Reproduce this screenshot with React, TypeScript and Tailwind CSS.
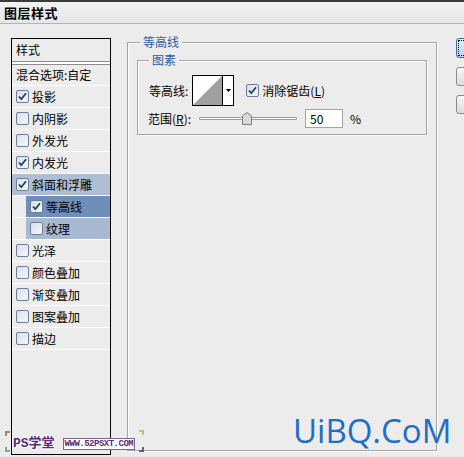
import React from "react";

const font = "font-['SimSun','Noto_Sans_CJK_SC',sans-serif]";

function Check({ on }: { on: boolean }) {
  return (
    <svg width="13" height="13" viewBox="0 0 13 13" className="shrink-0">
      <defs>
        <linearGradient id="cbg" x1="0" y1="0" x2="1" y2="1">
          <stop offset="0" stopColor="#d8dfe9" />
          <stop offset="1" stopColor="#f7f8fa" />
        </linearGradient>
      </defs>
      <rect x="0.5" y="0.5" width="12" height="12" rx="1.5" fill="url(#cbg)" stroke="#6d7d93" />
      {on && <path d="M3 6.5 L5.3 9.2 L10 3.3" fill="none" stroke="#1f3f6e" strokeWidth="1.8" />}
    </svg>
  );
}

type Row = { label: string; on?: boolean; sub?: boolean; tone?: "mid" | "dark" | "light" };

const rows: Row[] = [
  { label: "投影", on: true },
  { label: "内阴影" },
  { label: "外发光" },
  { label: "内发光", on: true },
  { label: "斜面和浮雕", on: true, tone: "mid" },
  { label: "等高线", on: true, sub: true, tone: "dark" },
  { label: "纹理", sub: true, tone: "light" },
  { label: "光泽" },
  { label: "颜色叠加" },
  { label: "渐变叠加" },
  { label: "图案叠加" },
  { label: "描边" },
];

function ListRow({ r }: { r: Row }) {
  const bg =
    r.tone === "mid" ? "bg-[#afbed2]" : r.tone === "dark" ? "bg-[#6f8fba]" : r.tone === "light" ? "bg-[#a8bad3]" : "";
  return (
    <div className="h-[22px] flex border-b border-white">
      <div className={`flex-1 flex items-center gap-[3px] ${r.sub ? "ml-[14px] pl-[4px]" : "pl-[4px]"} ${bg}`}>
        <Check on={!!r.on} />
        <span className="text-[12px] text-black">{r.label}</span>
      </div>
    </div>
  );
}

export default function App() {
  return (
    <div className={`w-[464px] h-[457px] overflow-hidden relative bg-[#ececec] ${font} text-[12px] text-black`}>
      <div className="h-[24px] border-t-2 border-[#3b3b3b] border-b border-b-[#b4b4b4] bg-gradient-to-b from-[#f3f3f3] to-[#e6e6e6] flex items-center pl-[4px]">
        <span className="text-[13px] font-bold tracking-[0.5px]">图层样式</span>
      </div>
      <div className="flex pt-[14px] pl-[11px]">
        <div className="w-[100px] h-[417px] border border-black bg-[#ececec] shrink-0">
          <div className="h-[23px] flex items-center pl-[4px] border-b border-[#8c8c8c]">样式</div>
          <div className="h-[2px] bg-white" />
          <div className="h-[22px] flex items-center pl-[4px] border-t border-[#8c8c8c] border-b border-b-white">混合选项:自定</div>
          {rows.map((r) => (
            <ListRow key={r.label} r={r} />
          ))}
        </div>

        <div className="ml-[16px] mt-[4px] w-[310px] h-[409px] border border-[#a3a3a3] shadow-[inset_1px_1px_0_#fff,1px_1px_0_#fff] relative shrink-0">
          <span className="absolute -top-[9px] left-[12px] px-[3px] bg-[#ececec] text-[#2b5b9c] text-[12px] leading-[16px]">等高线</span>
          <div className="mt-[17px] mx-[9px] h-[75px] border border-[#a3a3a3] shadow-[inset_1px_1px_0_#fff,1px_1px_0_#fff] relative">
            <span className="absolute -top-[9px] left-[11px] px-[3px] bg-[#ececec] text-[#2b5b9c] text-[12px] leading-[16px]">图素</span>
            <div className="flex items-center mt-[14px] ml-[11px]">
              <span>等高线:</span>
              <div className="ml-[4px] flex h-[31px] border border-black bg-white">
                <svg width="29" height="29" viewBox="0 0 29 29" className="block">
                  <polygon points="0,29 29,0 29,29" fill="#a0a0a0" />
                </svg>
                <div className="w-[11px] border-l border-black flex items-center justify-center">
                  <svg width="5" height="3" viewBox="0 0 5 3">
                    <polygon points="0,0 5,0 2.5,3" fill="#000" />
                  </svg>
                </div>
              </div>
              <div className="ml-[12px] flex items-center gap-[3px]">
                <Check on />
                <span>
                  消除锯齿(<span className="underline">L</span>)
                </span>
              </div>
            </div>
            <div className="flex items-center mt-[3px] ml-[10px]">
              <span>
                范围(<span className="underline">R</span>):
              </span>
              <div className="ml-[8px] w-[98px] h-[14px] relative flex items-center">
                <div className="w-full h-[3px] border border-[#9a9a9a] bg-white rounded-[1px]" />
                <svg width="10" height="13" viewBox="0 0 10 13" className="absolute left-[43px] top-0">
                  <path d="M0.5 12.5 V4 L5 0.5 L9.5 4 V12.5 Z" fill="#d9d9d9" stroke="#7d7d7d" />
                </svg>
              </div>
              <div className="ml-[8px] w-[38px] h-[19px] border border-[#a5a5a5] bg-white pl-[4px] flex items-center text-[12px]">50</div>
              <span className="ml-[7px]">%</span>
            </div>
          </div>
        </div>

        <div className="ml-[19px] flex flex-col gap-[9px] shrink-0">
          <div className="w-[40px] h-[20px] rounded-[3px] border border-[#3d6fa8] bg-gradient-to-b from-[#e4eefa] to-[#b9d1ee] outline-1 outline-dotted outline-black -outline-offset-3" />
          <div className="w-[40px] h-[19px] rounded-[3px] border border-[#8a8a8a] bg-gradient-to-b from-[#f6f6f6] to-[#dcdcdc]" />
          <div className="w-[40px] h-[19px] rounded-[3px] border border-[#8a8a8a] bg-gradient-to-b from-[#f6f6f6] to-[#dcdcdc]" />
        </div>
      </div>

      <div className="absolute left-[5px] top-[431px] w-[5px] h-[5px] border-l-2 border-t-2 border-[#a08080]" />
      <div className="absolute left-[5px] top-[447px] w-[5px] h-[5px] border-l-2 border-b-2 border-[#7fae7f]" />
      <div className="absolute left-[13px] top-[434px] flex items-center gap-[8px]">
        <span className="text-[13px] font-bold text-[#5a2a7a] [text-shadow:1px_0_0_#fff,-1px_0_0_#fff,0_1px_0_#fff,0_-1px_0_#fff] font-['Liberation_Mono','Noto_Sans_CJK_SC',monospace]">PS学堂</span>
        <span className="text-[9px] leading-[10px] px-[1px] border border-[#7a6a8a] bg-white text-[#5a2a7a] font-['Liberation_Mono',monospace] font-bold tracking-[-0.5px]">WWW.52PSXT.COM</span>
      </div>
      <div className="absolute left-[139px] top-[430px] w-[5px] h-[5px] border-r-2 border-t-2 border-[#c8c070]" />
      <div className="absolute left-[139px] top-[447px] w-[5px] h-[5px] border-r-2 border-b-2 border-[#606080]" />

      <div className="absolute left-[293px] top-[409px] text-[33px] leading-[44px] text-[#1e6ec8] font-['Open_Sans',sans-serif] tracking-[0px]">UiBQ.CoM</div>
    </div>
  );
}
